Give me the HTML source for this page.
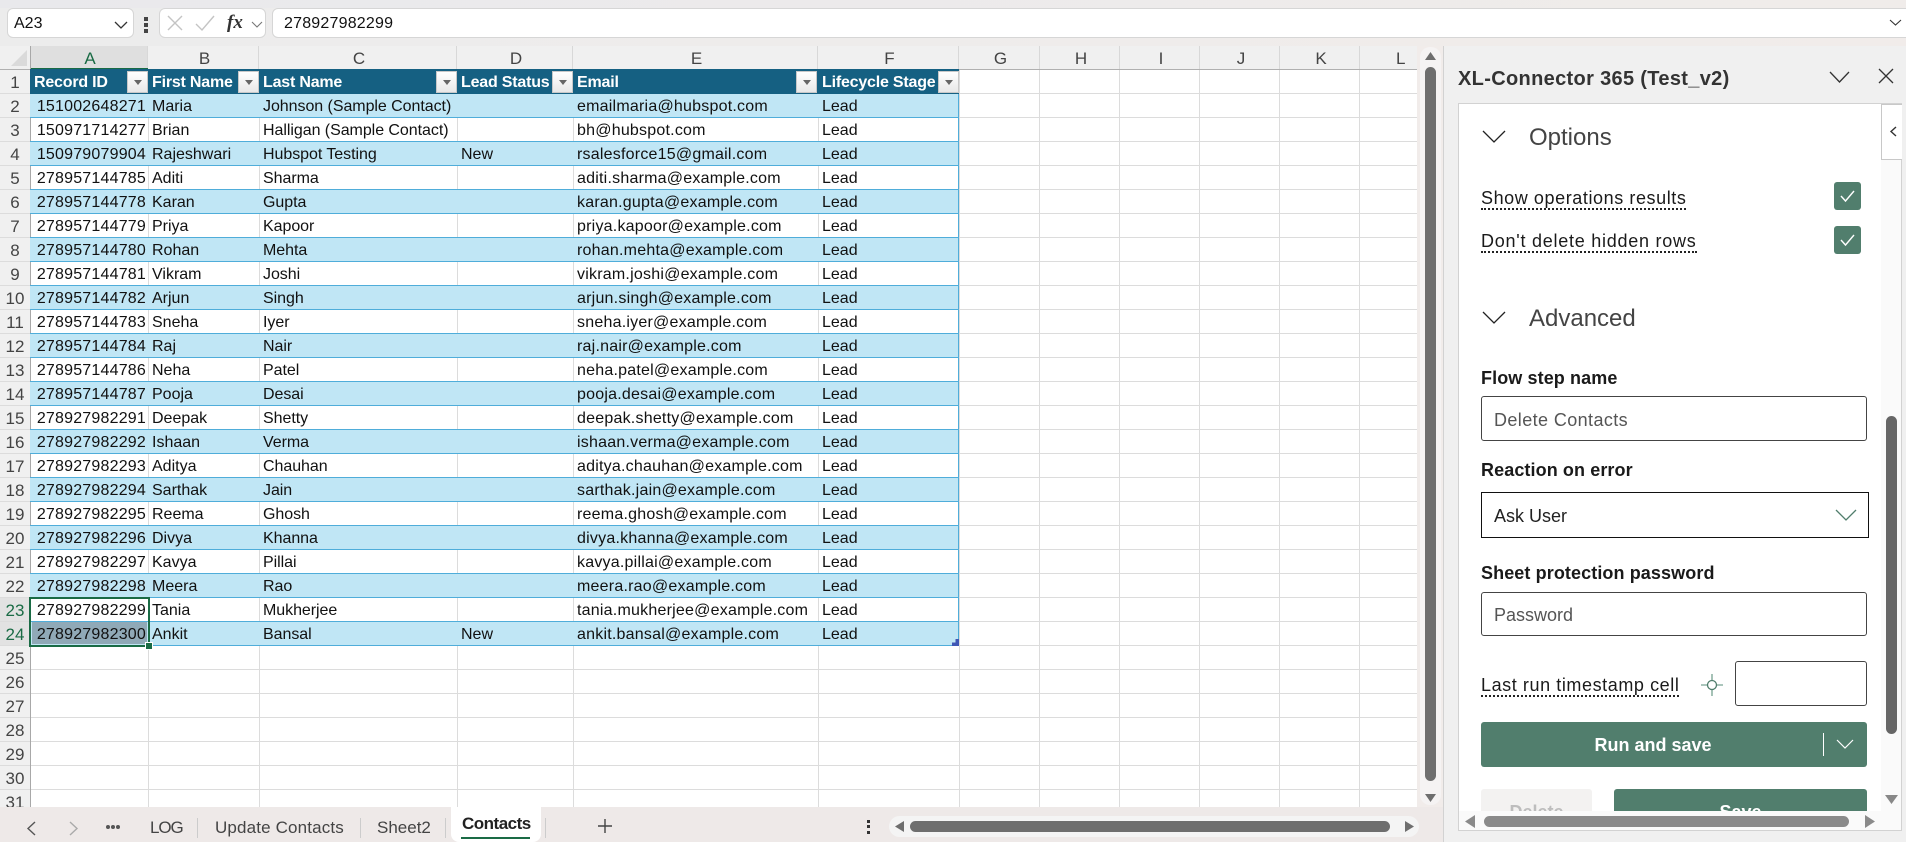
<!DOCTYPE html>
<html><head><meta charset="utf-8"><style>
html,body{margin:0;padding:0}
body{width:1906px;height:842px;position:relative;overflow:hidden;background:#f0ecea;font-family:"Liberation Sans",sans-serif;color:#111}
div,span,svg{position:absolute;box-sizing:border-box}
.t{white-space:nowrap}
.box{background:#fff;border:1px solid #d6d6d6;border-radius:6px}
.ch{position:absolute;top:46px;height:23px;line-height:25px;text-align:center;font-size:17px;color:#444;border-right:1px solid #d8d8d8;background:#f0f0f0;padding-left:3px}
.rh{position:absolute;left:0;width:30px;height:24px;line-height:25px;text-align:center;font-size:17px;color:#444;background:#f0f0f0;border-bottom:1px solid #dcdcdc}
.v{top:70px;width:1px;height:737px;background:#dcdcdc}
.h{left:30px;width:1387px;height:1px;background:#dcdcdc}
.r{left:30px;width:929px;height:24px;border-bottom:1px solid #4fadda;font-size:16px;line-height:25px;white-space:nowrap}
.bl{background:#c0e6f5}
.r span{top:0}
.a{right:813px;text-align:right;letter-spacing:.2px}.b{left:122px}.c{left:233px;letter-spacing:-.05px}.d{left:431px}.e{left:547px;letter-spacing:.22px}.f{left:792px}
.hd span{color:#fff;font-weight:bold;letter-spacing:-.2px}
.fb{top:71px;width:21px;height:22px;background:linear-gradient(#fff,#e8e8e8);border:1px solid #c8c8c8}
.fb:after{content:"";position:absolute;left:6px;top:8px;border:4px solid transparent;border-top:5px solid #666;border-bottom:0}
.tab{top:816px;font-size:17px;color:#444;line-height:24px;white-space:nowrap}
.sep{top:818px;width:1px;height:20px;background:#ccc}
.pt{font-size:18px;white-space:nowrap;line-height:24px;color:#1a1a1a}
.dot{border-bottom:2px dotted #222;line-height:20px}
.lb{font-size:18px;font-weight:bold;white-space:nowrap;line-height:24px;color:#1a1a1a;letter-spacing:.1px}
.inp{left:1481px;width:386px;border:1px solid #444;border-radius:3px;background:#fff;font-size:18px;color:#555;padding-left:12px}
.cb{left:1834px;width:27px;height:28px;background:#517e6d;border-radius:3px}
svg{overflow:visible}
</style></head><body>

<div style="left:0;top:0;width:1906px;height:8px;background:linear-gradient(90deg,#e9e9ec,#f0ecea)"></div>
<div style="left:0;top:8px;width:1906px;height:38px;background:linear-gradient(90deg,#ececec,#f1ecea)"></div>

<div class="box t" style="left:7px;top:8px;width:127px;height:30px;font-size:16px;line-height:30px;padding-left:6px">A23</div>
<svg style="left:114px;top:21px" width="14" height="8"><path d="M1 1L7 7L13 1" fill="none" stroke="#333" stroke-width="1.3"/></svg>
<div style="left:144px;top:17px;width:4px;height:4px;background:#444"></div>
<div style="left:144px;top:23px;width:4px;height:4px;background:#444"></div>
<div style="left:144px;top:29px;width:4px;height:4px;background:#444"></div>
<div class="box" style="left:159px;top:8px;width:107px;height:30px"></div>
<svg style="left:167px;top:15px" width="16" height="16"><path d="M1 1L15 15M15 1L1 15" fill="none" stroke="#c4c4c4" stroke-width="1.4"/></svg>
<svg style="left:195px;top:15px" width="20" height="16"><path d="M1 9L7 15L19 1" fill="none" stroke="#c4c4c4" stroke-width="1.4"/></svg>
<div class="t" style="left:227px;top:8px;font:italic bold 19px/30px 'Liberation Serif',serif;color:#333">fx</div>
<svg style="left:251px;top:21px" width="12" height="7"><path d="M1 1L6 6L11 1" fill="none" stroke="#777" stroke-width="1.1"/></svg>
<div class="box t" style="left:272px;top:8px;width:1640px;height:30px;font-size:16px;line-height:30px;padding-left:11px;letter-spacing:.2px">278927982299</div>
<svg style="left:1889px;top:19px" width="13" height="7"><path d="M1 1L6.500 6L12 1" fill="none" stroke="#333" stroke-width="1.1"/></svg>

<!-- sheet -->
<div style="left:0;top:46px;width:1417px;height:761px;background:#fff"></div>
<div style="left:0;top:46px;width:30px;height:24px;background:#f0f0f0"></div>
<svg style="left:11px;top:50px" width="17" height="17"><path d="M16 0V16H0Z" fill="#dadada"/></svg>

<div class="ch" style="left:30px;width:118px;background:#dfdfdf;color:#1a6b45">A</div>
<div class="ch" style="left:148px;width:111px">B</div>
<div class="ch" style="left:259px;width:198px">C</div>
<div class="ch" style="left:457px;width:116px">D</div>
<div class="ch" style="left:573px;width:245px">E</div>
<div class="ch" style="left:818px;width:141px">F</div>
<div class="ch" style="left:959px;width:81px">G</div>
<div class="ch" style="left:1040px;width:80px">H</div>
<div class="ch" style="left:1120px;width:80px">I</div>
<div class="ch" style="left:1200px;width:80px">J</div>
<div class="ch" style="left:1280px;width:80px">K</div>
<div class="ch" style="left:1360px;width:57px;border-right:0;text-align:left;padding-left:36px">L</div>
<div style="left:0;top:69px;width:1417px;height:1px;background:#b0b0b0"></div>
<div style="left:30px;top:68px;width:118px;height:2px;background:#1a6b45"></div>
<div style="left:30px;top:46px;width:1px;height:761px;background:#a8a8a8"></div>

<div class="v" style="left:148px"></div><div class="v" style="left:259px"></div><div class="v" style="left:457px"></div><div class="v" style="left:573px"></div><div class="v" style="left:818px"></div><div class="v" style="left:959px"></div><div class="v" style="left:1039px"></div><div class="v" style="left:1119px"></div><div class="v" style="left:1199px"></div><div class="v" style="left:1279px"></div><div class="v" style="left:1359px"></div>
<div class="h" style="top:93px"></div><div class="h" style="top:117px"></div><div class="h" style="top:141px"></div><div class="h" style="top:165px"></div><div class="h" style="top:189px"></div><div class="h" style="top:213px"></div><div class="h" style="top:237px"></div><div class="h" style="top:261px"></div><div class="h" style="top:285px"></div><div class="h" style="top:309px"></div><div class="h" style="top:333px"></div><div class="h" style="top:357px"></div><div class="h" style="top:381px"></div><div class="h" style="top:405px"></div><div class="h" style="top:429px"></div><div class="h" style="top:453px"></div><div class="h" style="top:477px"></div><div class="h" style="top:501px"></div><div class="h" style="top:525px"></div><div class="h" style="top:549px"></div><div class="h" style="top:573px"></div><div class="h" style="top:597px"></div><div class="h" style="top:621px"></div><div class="h" style="top:645px"></div><div class="h" style="top:669px"></div><div class="h" style="top:693px"></div><div class="h" style="top:717px"></div><div class="h" style="top:741px"></div><div class="h" style="top:765px"></div><div class="h" style="top:789px"></div>

<div class="rh" style="top:70px">1</div><div class="rh" style="top:94px">2</div><div class="rh" style="top:118px">3</div><div class="rh" style="top:142px">4</div><div class="rh" style="top:166px">5</div><div class="rh" style="top:190px">6</div><div class="rh" style="top:214px">7</div><div class="rh" style="top:238px">8</div><div class="rh" style="top:262px">9</div><div class="rh" style="top:286px">10</div><div class="rh" style="top:310px">11</div><div class="rh" style="top:334px">12</div><div class="rh" style="top:358px">13</div><div class="rh" style="top:382px">14</div><div class="rh" style="top:406px">15</div><div class="rh" style="top:430px">16</div><div class="rh" style="top:454px">17</div><div class="rh" style="top:478px">18</div><div class="rh" style="top:502px">19</div><div class="rh" style="top:526px">20</div><div class="rh" style="top:550px">21</div><div class="rh" style="top:574px">22</div><div class="rh" style="top:598px;background:#e2e2e2;color:#1a6b45">23</div><div class="rh" style="top:622px;background:#e2e2e2;color:#1a6b45">24</div><div class="rh" style="top:646px">25</div><div class="rh" style="top:670px">26</div><div class="rh" style="top:694px">27</div><div class="rh" style="top:718px">28</div><div class="rh" style="top:742px">29</div><div class="rh" style="top:766px">30</div><div class="rh" style="top:790px;height:17px;overflow:hidden;border:0">31</div>
<div style="left:30px;top:46px;width:1px;height:761px;background:#a8a8a8"></div>

<!-- table -->
<div class="r hd" style="top:69px;height:25px;background:#156082;border-bottom:1px solid #156082;line-height:27px"><span style="left:4px">Record ID</span><span class="b">First Name</span><span class="c">Last Name</span><span class="d">Lead Status</span><span class="e">Email</span><span class="f">Lifecycle Stage</span></div>
<div class="fb" style="left:127px"></div><div class="fb" style="left:238px"></div><div class="fb" style="left:436px"></div><div class="fb" style="left:552px"></div><div class="fb" style="left:796px"></div><div class="fb" style="left:938px"></div>

<div class="r bl" style="top:94px"><span class="a">151002648271</span><span class="b">Maria</span><span class="c">Johnson (Sample Contact)</span><span class="e">emailmaria@hubspot.com</span><span class="f">Lead</span></div>
<div class="r" style="top:118px"><span class="a">150971714277</span><span class="b">Brian</span><span class="c">Halligan (Sample Contact)</span><span class="e">bh@hubspot.com</span><span class="f">Lead</span></div>
<div class="r bl" style="top:142px"><span class="a">150979079904</span><span class="b">Rajeshwari</span><span class="c">Hubspot Testing</span><span class="d">New</span><span class="e">rsalesforce15@gmail.com</span><span class="f">Lead</span></div>
<div class="r" style="top:166px"><span class="a">278957144785</span><span class="b">Aditi</span><span class="c">Sharma</span><span class="e">aditi.sharma@example.com</span><span class="f">Lead</span></div>
<div class="r bl" style="top:190px"><span class="a">278957144778</span><span class="b">Karan</span><span class="c">Gupta</span><span class="e">karan.gupta@example.com</span><span class="f">Lead</span></div>
<div class="r" style="top:214px"><span class="a">278957144779</span><span class="b">Priya</span><span class="c">Kapoor</span><span class="e">priya.kapoor@example.com</span><span class="f">Lead</span></div>
<div class="r bl" style="top:238px"><span class="a">278957144780</span><span class="b">Rohan</span><span class="c">Mehta</span><span class="e">rohan.mehta@example.com</span><span class="f">Lead</span></div>
<div class="r" style="top:262px"><span class="a">278957144781</span><span class="b">Vikram</span><span class="c">Joshi</span><span class="e">vikram.joshi@example.com</span><span class="f">Lead</span></div>
<div class="r bl" style="top:286px"><span class="a">278957144782</span><span class="b">Arjun</span><span class="c">Singh</span><span class="e">arjun.singh@example.com</span><span class="f">Lead</span></div>
<div class="r" style="top:310px"><span class="a">278957144783</span><span class="b">Sneha</span><span class="c">Iyer</span><span class="e">sneha.iyer@example.com</span><span class="f">Lead</span></div>
<div class="r bl" style="top:334px"><span class="a">278957144784</span><span class="b">Raj</span><span class="c">Nair</span><span class="e">raj.nair@example.com</span><span class="f">Lead</span></div>
<div class="r" style="top:358px"><span class="a">278957144786</span><span class="b">Neha</span><span class="c">Patel</span><span class="e">neha.patel@example.com</span><span class="f">Lead</span></div>
<div class="r bl" style="top:382px"><span class="a">278957144787</span><span class="b">Pooja</span><span class="c">Desai</span><span class="e">pooja.desai@example.com</span><span class="f">Lead</span></div>
<div class="r" style="top:406px"><span class="a">278927982291</span><span class="b">Deepak</span><span class="c">Shetty</span><span class="e">deepak.shetty@example.com</span><span class="f">Lead</span></div>
<div class="r bl" style="top:430px"><span class="a">278927982292</span><span class="b">Ishaan</span><span class="c">Verma</span><span class="e">ishaan.verma@example.com</span><span class="f">Lead</span></div>
<div class="r" style="top:454px"><span class="a">278927982293</span><span class="b">Aditya</span><span class="c">Chauhan</span><span class="e">aditya.chauhan@example.com</span><span class="f">Lead</span></div>
<div class="r bl" style="top:478px"><span class="a">278927982294</span><span class="b">Sarthak</span><span class="c">Jain</span><span class="e">sarthak.jain@example.com</span><span class="f">Lead</span></div>
<div class="r" style="top:502px"><span class="a">278927982295</span><span class="b">Reema</span><span class="c">Ghosh</span><span class="e">reema.ghosh@example.com</span><span class="f">Lead</span></div>
<div class="r bl" style="top:526px"><span class="a">278927982296</span><span class="b">Divya</span><span class="c">Khanna</span><span class="e">divya.khanna@example.com</span><span class="f">Lead</span></div>
<div class="r" style="top:550px"><span class="a">278927982297</span><span class="b">Kavya</span><span class="c">Pillai</span><span class="e">kavya.pillai@example.com</span><span class="f">Lead</span></div>
<div class="r bl" style="top:574px"><span class="a">278927982298</span><span class="b">Meera</span><span class="c">Rao</span><span class="e">meera.rao@example.com</span><span class="f">Lead</span></div>
<div class="r" style="top:598px"><span class="a">278927982299</span><span class="b">Tania</span><span class="c">Mukherjee</span><span class="e">tania.mukherjee@example.com</span><span class="f">Lead</span></div>
<div class="r bl" style="top:622px"><div style="left:2px;top:0;width:115px;height:22px;background:#90a9b7"></div><span class="a">278927982300</span><span class="b">Ankit</span><span class="c">Bansal</span><span class="d">New</span><span class="e">ankit.bansal@example.com</span><span class="f">Lead</span></div>
<div style="left:958px;top:94px;width:1px;height:552px;background:#4fadda"></div>
<div style="left:29px;top:597px;width:121px;height:50px;border:2px solid #1a6b45"></div>
<div style="left:146px;top:643px;width:6px;height:6px;background:#1a6b45;border:1px solid #fff;box-sizing:content-box;margin:-1px"></div>
<svg style="left:952px;top:639px" width="7" height="7"><path d="M7 0V7H0V3.500H3.500V0Z" fill="#3f57b5"/></svg>

<!-- vertical scrollbar -->
<div style="left:1417px;top:46px;width:26px;height:761px;background:#f1ecea"></div>
<div style="left:1420px;top:47px;width:21px;height:758px;background:#f5f3f3;border-radius:10px"></div>
<div style="left:1425px;top:67px;width:11px;height:714px;background:#6e6e6e;border-radius:6px"></div>
<svg style="left:1425px;top:52px" width="11" height="8"><path d="M5.500 0L11 8H0Z" fill="#6e6e6e"/></svg>
<svg style="left:1425px;top:794px" width="11" height="8"><path d="M5.500 8L11 0H0Z" fill="#6e6e6e"/></svg>

<!-- tabs -->
<div style="left:0;top:807px;width:1443px;height:35px;background:#eee9e8"></div>
<svg style="left:27px;top:821px" width="9" height="15"><path d="M8 1L1 7.500L8 14" fill="none" stroke="#555" stroke-width="1.4"/></svg>
<svg style="left:69px;top:821px" width="9" height="15"><path d="M1 1L8 7.500L1 14" fill="none" stroke="#aaa" stroke-width="1.4"/></svg>
<div style="left:106px;top:825px;width:4px;height:4px;background:#555;border-radius:2px"></div><div style="left:111px;top:825px;width:4px;height:4px;background:#555;border-radius:2px"></div><div style="left:116px;top:825px;width:4px;height:4px;background:#555;border-radius:2px"></div>
<div class="tab" style="left:150px;letter-spacing:-1.1px">LOG</div><div class="sep" style="left:197px"></div>
<div class="tab" style="left:215px;letter-spacing:.15px">Update Contacts</div><div class="sep" style="left:360px"></div>
<div class="tab" style="left:377px">Sheet2</div><div class="sep" style="left:445px"></div>
<div style="left:451px;top:807px;width:90px;height:35px;background:#fff;border-radius:0 0 8px 8px"></div>
<div class="tab" style="left:462px;top:812px;font-weight:bold;color:#222;letter-spacing:-.5px">Contacts</div>
<div style="left:461px;top:837px;width:69px;height:2px;background:#1a6b45"></div>
<div class="sep" style="left:545px"></div>
<svg style="left:598px;top:819px" width="14" height="14"><path d="M7 0V14M0 7H14" stroke="#444" stroke-width="1.400"/></svg>
<div style="left:867px;top:820px;width:3px;height:3px;background:#333"></div><div style="left:867px;top:825px;width:3px;height:3px;background:#333"></div><div style="left:867px;top:831px;width:3px;height:3px;background:#333"></div>
<div style="left:889px;top:816px;width:530px;height:21px;background:#f4f4f4;border-radius:11px"></div>
<div style="left:910px;top:821px;width:480px;height:11px;background:#6e6e6e;border-radius:6px"></div>
<svg style="left:895px;top:821px" width="9" height="11"><path d="M0 5.500L9 0V11Z" fill="#6e6e6e"/></svg>
<svg style="left:1405px;top:821px" width="9" height="11"><path d="M9 5.500L0 0V11Z" fill="#6e6e6e"/></svg>

<!-- task pane -->
<div style="left:1443px;top:46px;width:463px;height:796px;background:#f0f0f0;border-left:1px solid #d2d2d2"></div>
<div class="t" style="left:1458px;top:64px;font-size:20px;line-height:30px;font-weight:bold;color:#333;letter-spacing:.33px">XL-Connector 365 (Test_v2)</div>
<svg style="left:1829px;top:71px" width="21" height="12"><path d="M1 1L10.500 11L20 1" fill="none" stroke="#333" stroke-width="1.300"/></svg>
<svg style="left:1878px;top:68px" width="16" height="16"><path d="M1 1L15 15M15 1L1 15" fill="none" stroke="#333" stroke-width="1.300"/></svg>
<div style="left:1458px;top:103px;width:444px;height:728px;background:#fff;border:1px solid #d2d2d2"></div>
<div style="left:1881px;top:104px;width:20px;height:726px;background:#fafafa"></div>
<div style="left:1881px;top:104px;width:21px;height:56px;background:#fff;border:1px solid #c8c8c8;border-right:0"></div>
<svg style="left:1890px;top:126px" width="7" height="11"><path d="M6 1L1 5.500L6 10" fill="none" stroke="#333" stroke-width="1.400"/></svg>

<svg style="left:1482px;top:130px" width="24" height="13"><path d="M1 1L12 12L23 1" fill="none" stroke="#222" stroke-width="1.300"/></svg>
<div class="t" style="left:1529px;top:122px;font-size:24px;line-height:32px;color:#444">Options</div>
<div class="pt dot" style="left:1481px;top:188px;letter-spacing:.58px">Show operations results</div>
<div class="cb" style="top:182px"></div>
<svg style="left:1840px;top:190px" width="15" height="12"><path d="M1 6L5.500 11L14 1" fill="none" stroke="#fff" stroke-width="1.400"/></svg>
<div class="pt dot" style="left:1481px;top:231px;letter-spacing:.75px">Don't delete hidden rows</div>
<div class="cb" style="top:226px"></div>
<svg style="left:1840px;top:234px" width="15" height="12"><path d="M1 6L5.500 11L14 1" fill="none" stroke="#fff" stroke-width="1.400"/></svg>

<svg style="left:1482px;top:311px" width="24" height="13"><path d="M1 1L12 12L23 1" fill="none" stroke="#222" stroke-width="1.300"/></svg>
<div class="t" style="left:1529px;top:303px;font-size:24px;line-height:32px;color:#444">Advanced</div>

<div class="lb" style="left:1481px;top:366px">Flow step name</div>
<div class="inp t" style="top:396px;height:45px;line-height:47px;letter-spacing:.4px">Delete Contacts</div>
<div class="lb" style="left:1481px;top:458px">Reaction on error</div>
<div class="t" style="left:1481px;top:492px;width:388px;height:46px;border:1px solid #111;background:#fff;font-size:18px;line-height:47px;padding-left:12px;color:#222">Ask User</div>
<svg style="left:1835px;top:509px" width="22" height="12"><path d="M1 1L11 11L21 1" fill="none" stroke="#517e6d" stroke-width="1.300"/></svg>
<div class="lb" style="left:1481px;top:561px">Sheet protection password</div>
<div class="inp t" style="top:592px;height:44px;line-height:44px">Password</div>
<div class="pt dot" style="left:1481px;top:675px;letter-spacing:.58px">Last run timestamp cell</div>
<svg style="left:1701px;top:674px" width="22" height="22"><path d="M11 0V7M11 15V22M0 11H7M15 11H22" stroke="#8fb3a5" stroke-width="1.600"/><circle cx="11" cy="11" r="4.500" fill="none" stroke="#517e6d" stroke-width="1.300"/></svg>
<div class="inp" style="left:1735px;top:661px;width:132px;height:45px"></div>

<div class="t" style="left:1481px;top:722px;width:386px;height:45px;background:#517e6d;border-radius:3px;color:#fff;font-size:18px;font-weight:bold;line-height:47px;text-align:center;padding-right:42px">Run and save</div>
<div style="left:1823px;top:733px;width:1px;height:23px;background:#fff"></div>
<svg style="left:1836px;top:739px" width="18" height="10"><path d="M1 1L9 9L17 1" fill="none" stroke="#fff" stroke-width="1.200"/></svg>

<div style="left:1459px;top:785px;width:422px;height:26px;overflow:hidden">
<div class="t" style="left:22px;top:4px;width:111px;height:45px;background:#f3f2f1;border-radius:3px;color:#bdbdbd;font-size:18px;font-weight:bold;line-height:47px;text-align:center">Delete</div>
<div class="t" style="left:155px;top:4px;width:253px;height:45px;background:#517e6d;border-radius:3px;color:#fff;font-size:18px;font-weight:bold;line-height:47px;text-align:center">Save</div>
</div>

<div style="left:1886px;top:416px;width:11px;height:318px;background:#666;border-radius:6px"></div>
<svg style="left:1885px;top:795px" width="13" height="9"><path d="M6.500 9L13 0H0Z" fill="#888"/></svg>
<div style="left:1459px;top:811px;width:441px;height:19px;background:#fafafa"></div>
<div style="left:1484px;top:816px;width:365px;height:11px;background:#8a8a8a;border-radius:6px"></div>
<svg style="left:1465px;top:815px" width="10" height="13"><path d="M0 6.500L10 0V13Z" fill="#8a8a8a"/></svg>
<svg style="left:1865px;top:815px" width="10" height="13"><path d="M10 6.500L0 0V13Z" fill="#8a8a8a"/></svg>
</body></html>
